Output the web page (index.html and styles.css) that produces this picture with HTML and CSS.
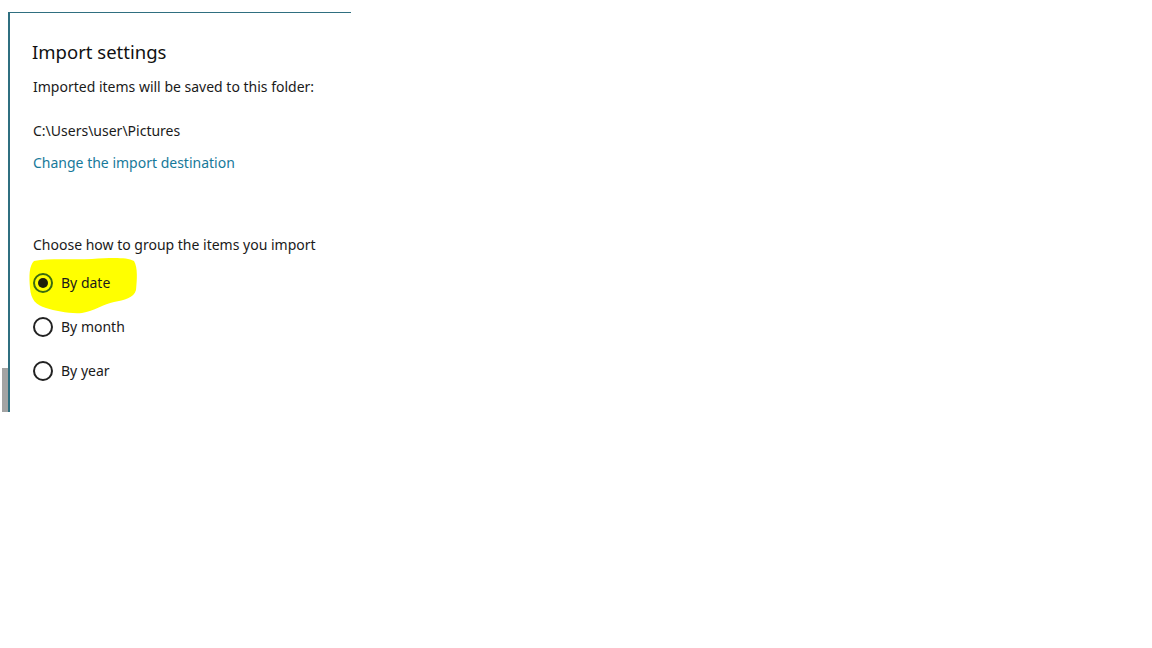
FILE: index.html
```html
<!DOCTYPE html>
<html>
<head>
<meta charset="utf-8">
<link rel="stylesheet" href="styles.css">
</head>
<body>
<div class="wrap">
  <div class="scroll"></div>
  <div class="panel">
    <h1 class="title">Import settings</h1>
    <p class="text first">Imported items will be saved to this folder:</p>
    <p class="text path">C:\Users\user\Pictures</p>
    <a class="link" href="#">Change the import destination</a>
    <p class="text choose">Choose how to group the items you import</p>
    <div class="options">
      <svg class="hl" width="112" height="58" viewBox="0 0 112 58">
        <path d="M6 5 C22 2 44 4 64 3 C82 2 98 1 106 5 C110 12 109 24 108 34 C106 42 96 44 86 46 C76 48 66 55 54 57 C42 58 28 55 18 52 C8 49 3 44 2 32 C1 20 1 10 6 5 Z" fill="#ffff00"/>
      </svg>
      <label class="opt"><span class="radio on"></span><span class="lbl">By date</span></label>
      <label class="opt"><span class="radio"></span><span class="lbl">By month</span></label>
      <label class="opt"><span class="radio"></span><span class="lbl">By year</span></label>
    </div>
  </div>
</div>
</body>
</html>
```
FILE: styles.css
```css
html, body {
  margin: 0;
  padding: 0;
  background: #ffffff;
}
body {
  font-family: "Noto Sans", "Open Sans", sans-serif;
  color: #1a1a1a;
}
.wrap {
  display: flex;
  padding-top: 12px;
  padding-left: 2px;
}
.scroll {
  width: 6px;
  height: 44px;
  align-self: flex-end;
  background: #a3a3a3;
}
.panel {
  position: relative;
  width: 343px;
  height: 400px;
  box-sizing: border-box;
  border-top: 1px solid #2f6f80;
  border-left: 2px solid #2f6f80;
  padding-left: 23px;
  display: flex;
  flex-direction: column;
  align-items: flex-start;
}
.title {
  margin: 25px 0 0 -1px;
  font-size: 18.5px;
  font-weight: 400;
  line-height: 28px;
  color: #111;
}
.text {
  margin: 0;
  font-size: 14px;
  line-height: 20px;
}
.first { margin-top: 11px; }
.path { margin-top: 24px; }
.link {
  margin-top: 12px;
  font-size: 14px;
  line-height: 20px;
  color: #17799a;
  text-decoration: none;
}
.choose { margin-top: 62px; }
.options {
  position: relative;
  margin-top: 18px;
  display: flex;
  flex-direction: column;
  gap: 24px;
}
.hl {
  position: absolute;
  left: -5px;
  top: -17px;
}
.opt {
  position: relative;
  display: flex;
  align-items: center;
  height: 20px;
  gap: 8px;
  font-size: 14px;
}
.radio {
  width: 16px;
  height: 16px;
  border: 2px solid #222;
  border-radius: 50%;
  display: flex;
  align-items: center;
  justify-content: center;
}
.radio.on {
  border-color: #3a6a10;
}
.radio.on::after {
  content: "";
  width: 10px;
  height: 10px;
  border-radius: 50%;
  background: #1f1f0a;
}
.lbl { line-height: 20px; }
```
